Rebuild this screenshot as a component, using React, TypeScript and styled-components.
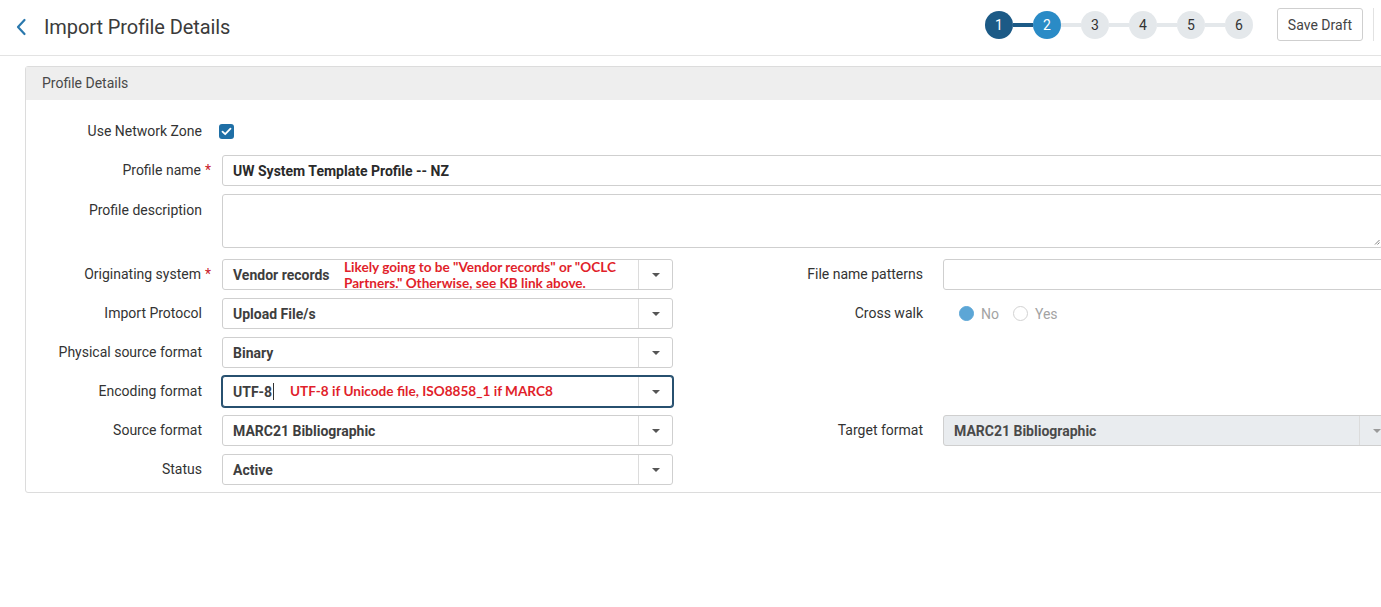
import React from "react";
import styled, { createGlobalStyle } from "styled-components";

const GlobalStyle = createGlobalStyle`
  html, body { margin: 0; padding: 0; background: #fff; overflow: hidden; }
  body { font-family: Roboto, "Liberation Sans", Arial, sans-serif; color: #333; font-size: 14px; }
  * { box-sizing: border-box; }
`;

const Page = styled.div`
  width: 1381px;
  height: 607px;
  overflow: hidden;
  position: relative;
`;

const Header = styled.header`
  display: flex;
  align-items: center;
  height: 56px;
  border-bottom: 1px solid #e3e3e3;
  padding-left: 12px;
  padding-bottom: 6px;
`;

const BackButton = styled.button`
  border: 0;
  background: none;
  padding: 0;
  width: 18px;
  height: 20px;
  margin-top: 4px;
  display: flex;
  align-items: center;
  justify-content: center;
  cursor: pointer;
`;

const Title = styled.h1`
  margin: 4px 0 0 14px;
  font-size: 20px;
  font-weight: 400;
  color: #3b3b3b;
  letter-spacing: -0.1px;
  flex: 1;
`;

const Stepper = styled.ol`
  display: flex;
  align-items: center;
  list-style: none;
  margin: 0;
  padding: 0;
`;

const StepCircle = styled.li<{ $state: "done" | "current" | "todo" }>`
  width: 28px;
  height: 28px;
  border-radius: 50%;
  display: flex;
  align-items: center;
  justify-content: center;
  font-size: 14px;
  background: ${(p) =>
    p.$state === "done" ? "#1c5a86" : p.$state === "current" ? "#2a8bc6" : "#e4e8eb"};
  color: ${(p) => (p.$state === "todo" ? "#333" : "#fff")};
`;

const StepLine = styled.li<{ $active: boolean }>`
  width: 20px;
  height: 4px;
  background: ${(p) => (p.$active ? "#1c5a86" : "#e4e8eb")};
`;

const SaveButton = styled.button`
  margin-left: 24px;
  height: 33px;
  padding: 0 10px;
  border: 1px solid #cfcfcf;
  border-radius: 3px;
  background: #fff;
  font-family: Roboto, "Liberation Sans", Arial, sans-serif;
  font-size: 14px;
  color: #444;
`;

const VDivider = styled.span`
  width: 1px;
  height: 33px;
  background: #e2e2e2;
  margin-left: 10px;
  margin-right: 7px;
`;

const Content = styled.main`
  padding: 10px 0 0 25px;
`;

const Panel = styled.section`
  width: 1420px;
  border: 1px solid #dcdcdc;
  border-radius: 3px;
`;

const PanelHeader = styled.div`
  height: 33px;
  background: #eeeeee;
  display: flex;
  align-items: center;
  padding-left: 16px;
  padding-bottom: 1px;
  font-size: 14px;
  color: #484848;
`;

const PanelBody = styled.div`
  display: flex;
  flex-direction: column;
  gap: 8px;
  padding: 16px 0 7px 0;
`;

const Row = styled.div<{ $extra?: number }>`
  display: flex;
  margin-bottom: ${(p) => p.$extra ?? 0}px;
`;

const Field = styled.div<{ $width?: number }>`
  display: flex;
  align-items: flex-start;
  width: ${(p) => (p.$width ? `${p.$width}px` : "auto")};
`;

const Label = styled.label<{ $top?: boolean }>`
  width: 196px;
  padding-right: 20px;
  text-align: right;
  line-height: 31px;
  font-size: 14px;
  color: #333;
  flex-shrink: 0;
  white-space: nowrap;
  ${(p) => (p.$top ? "line-height: 20px; padding-top: 6px;" : "")}
`;

const Required = styled.span`
  color: #c8202a;
  margin-left: 4px;
  margin-right: -9px;
`;

const TextInput = styled.div<{ $width: number }>`
  width: ${(p) => p.$width}px;
  height: 31px;
  border: 1px solid #cfcfcf;
  border-radius: 3px;
  background: #fff;
  display: flex;
  align-items: center;
  padding-left: 10px;
  font-weight: 700;
  font-size: 14px;
  color: #2a2a2a;
`;

const TextArea = styled.div<{ $width: number }>`
  width: ${(p) => p.$width}px;
  height: 54px;
  border: 1px solid #cfcfcf;
  border-radius: 3px;
  background: #fff;
  position: relative;
`;

const ResizeGrip = styled.svg`
  position: absolute;
  right: 2px;
  bottom: 2px;
`;

const SelectBox = styled.div<{ $width: number; $disabled?: boolean; $focused?: boolean }>`
  position: relative;
  width: ${(p) => p.$width}px;
  height: 31px;
  border: 1px solid ${(p) => (p.$focused ? "#27506f" : "#cfcfcf")};
  box-shadow: ${(p) => (p.$focused ? "0 0 0 1px #27506f" : "none")};
  border-radius: 3px;
  background: ${(p) => (p.$disabled ? "#e9ecef" : "#fff")};
  display: flex;
  align-items: stretch;
`;

const SelectValue = styled.div<{ $disabled?: boolean }>`
  flex: 1;
  display: flex;
  align-items: center;
  padding-left: 10px;
  font-weight: 700;
  font-size: 14px;
  color: ${(p) => (p.$disabled ? "#4a4a4a" : "#3e3e3e")};
`;

const Caret = styled.div<{ $disabled?: boolean }>`
  width: 34px;
  border-left: 1px solid #dcdcdc;
  display: flex;
  align-items: center;
  justify-content: center;
  &::after {
    content: "";
    border-left: 4px solid transparent;
    border-right: 4px solid transparent;
    border-top: 4px solid ${(p) => (p.$disabled ? "#9a9a9a" : "#555")};
  }
`;

const Cursor = styled.span`
  display: inline-block;
  width: 1px;
  height: 17px;
  background: #333;
  margin-left: 1px;
`;

const Annotation = styled.div<{ $left: number; $top: number }>`
  position: absolute;
  left: ${(p) => p.$left}px;
  top: ${(p) => p.$top}px;
  font-family: Lato, "Open Sans", sans-serif;
  font-weight: 700;
  font-size: 13.6px;
  line-height: 16px;
  color: #e11f2b;
  pointer-events: none;
  white-space: nowrap;
`;

const Checkbox = styled.span`
  width: 15px;
  height: 15px;
  border-radius: 3px;
  background: #1f6fa6;
  display: flex;
  align-items: center;
  justify-content: center;
  margin-top: 8px;
  margin-left: -3px;
`;

const RadioGroup = styled.div`
  display: flex;
  align-items: center;
  height: 31px;
  padding-left: 16px;
  gap: 14px;
`;

const RadioOption = styled.span`
  display: flex;
  align-items: center;
  gap: 7px;
  color: #a3a3a3;
  font-size: 14px;
`;

const RadioDot = styled.span<{ $checked: boolean }>`
  width: 15px;
  height: 15px;
  border-radius: 50%;
  background: ${(p) => (p.$checked ? "#5ca6d6" : "#fff")};
  border: 1px solid ${(p) => (p.$checked ? "#5ca6d6" : "#d2d2d2")};
`;

const LEFT_HALF = 721;
const SELECT_W = 451;

function Select({
  value,
  width = SELECT_W,
  disabled,
  focused,
  children,
}: {
  value: React.ReactNode;
  width?: number;
  disabled?: boolean;
  focused?: boolean;
  children?: React.ReactNode;
}) {
  return (
    <SelectBox $width={width} $disabled={disabled} $focused={focused}>
      <SelectValue $disabled={disabled}>{value}</SelectValue>
      <Caret $disabled={disabled} />
      {children}
    </SelectBox>
  );
}

export default function App() {
  const steps = [1, 2, 3, 4, 5, 6];
  return (
    <Page>
      <GlobalStyle />
      <Header>
        <BackButton aria-label="Back">
          <svg width="12" height="18" viewBox="0 0 12 18">
            <path d="M9.5 2 L3 9 L9.5 16" fill="none" stroke="#2a78ad" strokeWidth="2.2" strokeLinecap="round" strokeLinejoin="round" />
          </svg>
        </BackButton>
        <Title>Import Profile Details</Title>
        <Stepper>
          {steps.map((s, i) => (
            <React.Fragment key={s}>
              {i > 0 && <StepLine $active={i === 1} />}
              <StepCircle $state={s === 1 ? "done" : s === 2 ? "current" : "todo"}>{s}</StepCircle>
            </React.Fragment>
          ))}
        </Stepper>
        <SaveButton>Save Draft</SaveButton>
        <VDivider />
      </Header>
      <Content>
        <Panel>
          <PanelHeader>Profile Details</PanelHeader>
          <PanelBody>
            <Row>
              <Field>
                <Label>Use Network Zone</Label>
                <Checkbox>
                  <svg width="11" height="9" viewBox="0 0 11 9">
                    <path d="M1.5 4.6 L4.2 7.2 L9.5 1.6" fill="none" stroke="#fff" strokeWidth="1.8" strokeLinecap="round" strokeLinejoin="round" />
                  </svg>
                </Checkbox>
              </Field>
            </Row>
            <Row>
              <Field>
                <Label>
                  Profile name<Required>*</Required>
                </Label>
                <TextInput $width={1161}>UW System Template Profile -- NZ</TextInput>
              </Field>
            </Row>
            <Row $extra={3}>
              <Field>
                <Label $top>Profile description</Label>
                <TextArea $width={1161}>
                  <ResizeGrip width="6" height="6" viewBox="0 0 6 6">
                    <path d="M5.5 1 L1 5.5 M5.5 3.5 L3.5 5.5" stroke="#777" strokeWidth="0.9" />
                  </ResizeGrip>
                </TextArea>
              </Field>
            </Row>
            <Row>
              <Field $width={LEFT_HALF}>
                <Label>
                  Originating system<Required>*</Required>
                </Label>
                <Select value="Vendor records">
                  <Annotation $left={121} $top={-1}>
                    Likely going to be "Vendor records" or "OCLC
                    <br />
                    Partners." Otherwise, see KB link above.
                  </Annotation>
                </Select>
              </Field>
              <Field>
                <Label>File name patterns</Label>
                <TextInput $width={SELECT_W} />
              </Field>
            </Row>
            <Row>
              <Field $width={LEFT_HALF}>
                <Label>Import Protocol</Label>
                <Select value="Upload File/s" />
              </Field>
              <Field>
                <Label>Cross walk</Label>
                <RadioGroup>
                  <RadioOption>
                    <RadioDot $checked />
                    No
                  </RadioOption>
                  <RadioOption>
                    <RadioDot $checked={false} />
                    Yes
                  </RadioOption>
                </RadioGroup>
              </Field>
            </Row>
            <Row>
              <Field $width={LEFT_HALF}>
                <Label>Physical source format</Label>
                <Select value="Binary" />
              </Field>
            </Row>
            <Row>
              <Field $width={LEFT_HALF}>
                <Label>Encoding format</Label>
                <Select
                  focused
                  value={
                    <>
                      UTF-8
                      <Cursor />
                    </>
                  }
                >
                  <Annotation $left={67} $top={6}>
                    UTF-8 if Unicode file, ISO8858_1 if MARC8
                  </Annotation>
                </Select>
              </Field>
            </Row>
            <Row>
              <Field $width={LEFT_HALF}>
                <Label>Source format</Label>
                <Select value="MARC21 Bibliographic" />
              </Field>
              <Field>
                <Label>Target format</Label>
                <Select value="MARC21 Bibliographic" disabled />
              </Field>
            </Row>
            <Row>
              <Field $width={LEFT_HALF}>
                <Label>Status</Label>
                <Select value="Active" />
              </Field>
            </Row>
          </PanelBody>
        </Panel>
      </Content>
    </Page>
  );
}
